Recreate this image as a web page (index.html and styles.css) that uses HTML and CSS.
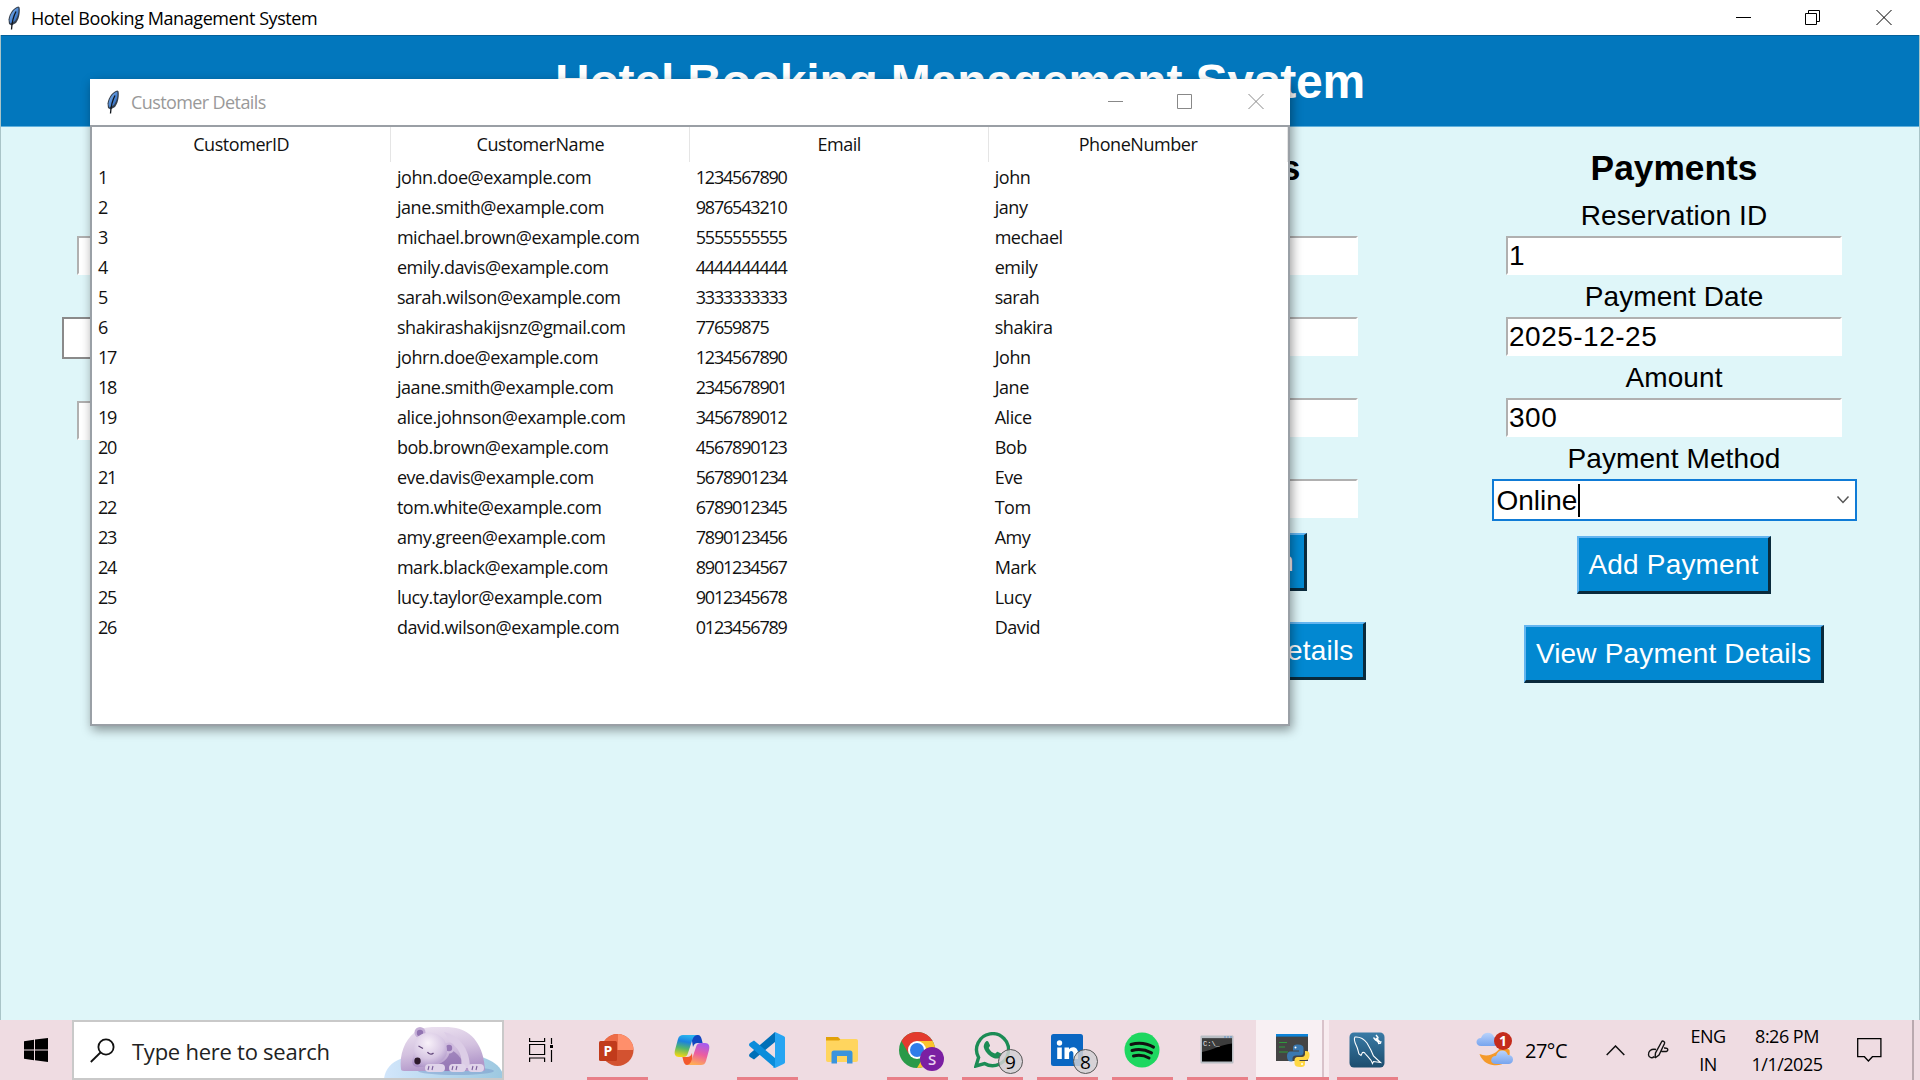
FILE: index.html
```html
<!DOCTYPE html>
<html lang="en">
<head>
<meta charset="utf-8">
<title>Hotel Booking Management System</title>
<link rel="stylesheet" href="styles.css">
</head>
<body>
<svg class="defs" width="0" height="0">
  <defs>
    <linearGradient id="gFeather" x1="0" y1="0" x2="1" y2="1"><stop offset="0" stop-color="#8fbcf0"/><stop offset=".6" stop-color="#4480d0"/><stop offset="1" stop-color="#2a5596"/></linearGradient>
    <symbol id="feather" viewBox="0 0 14 24">
      <path d="M11.500 .6C7 1.500 2.500 7 1.500 13.500L2 18l2.500 1.500L9 17c2.500-3.500 4.500-9.500 3.600-15.500z" fill="#35404e"/>
      <path d="M11.200 1.600C7 3 3 8.500 2.500 14.500l.8 3L8 15c2.500-3.500 4.200-8.500 3.200-13.400z" fill="url(#gFeather)"/>
      <path d="M9 5.500C6.500 10 5 15 4.500 23.500" stroke="#10151c" stroke-width="1.300" fill="none"/>
    </symbol>
  </defs>
</svg>

<div class="screen">
  <header class="titlebar">
    <svg class="feather" width="14" height="24"><use href="#feather"/></svg>
    <span class="titlebar-text">Hotel Booking Management System</span>
    <div class="controls">
      <svg width="16" height="20" viewBox="0 0 16 20"><path d="M0 9.500h15" stroke="#000"/></svg>
      <svg width="16" height="20" viewBox="0 0 16 20"><path d="M.5 5.500h11v11H.5zM3.500 5V2.500h11v11H12" fill="none" stroke="#000"/></svg>
      <svg width="16" height="20" viewBox="0 0 16 20"><path d="M.5 2l15 15M15.500 2l-15 15" stroke="#000"/></svg>
    </div>
  </header>

  <main class="app">
    <h1 class="banner">Hotel Booking Management System</h1>
    <div class="forms">
      <section class="form rooms">
        <div class="entry"></div>
        <div class="combo"></div>
        <div class="entry"></div>
      </section>
      <section class="form reservations">
        <h2>Reservations</h2>
        <div class="entry"></div>
        <div class="entry"></div>
        <div class="entry"></div>
        <div class="entry"></div>
        <div class="button">Add Reservation</div>
        <div class="button">View Reservations Details</div>
      </section>
      <section class="form payments">
        <h2>Payments</h2>
        <label>Reservation ID</label>
        <div class="entry">1</div>
        <label>Payment Date</label>
        <div class="entry">2025-12-25</div>
        <label>Amount</label>
        <div class="entry">300</div>
        <label>Payment Method</label>
        <div class="combo active"><span class="value">Online</span><svg width="14" height="10" viewBox="0 0 14 10"><path d="M1.500 1.500L7 7.500l5.500-6" fill="none" stroke="#555" stroke-width="1.500"/></svg></div>
        <div class="button">Add Payment</div>
        <div class="button">View Payment Details</div>
      </section>
    </div>
  </main>

  <footer class="taskbar">
    <div class="start"><svg width="24" height="24" viewBox="0 0 24 24"><path d="M0 3.300l10-1.500v9.700H0zM11 1.600L24 0v11.500H11zM0 12.500h10v9.700L0 20.800zM11 12.500h13V24l-13-1.700z"/></svg></div>
    <div class="search">
      <svg width="25" height="25" viewBox="0 0 25 25"><g fill="none" stroke="#111" stroke-width="1.800"><circle cx="16" cy="9" r="7.600"/><path d="M10.500 14.500L.8 24"/></g></svg>
      <span>Type here to search</span>
      <svg class="bear" width="120" height="52" viewBox="0 0 120 52">
        <defs>
          <linearGradient id="gIce" x1="0" x2="1"><stop offset="0" stop-color="#d2e6fb"/><stop offset="1" stop-color="#9cc8e0"/></linearGradient>
          <linearGradient id="gBody" x1="0" y1="0" x2=".3" y2="1"><stop offset="0" stop-color="#efe6f3"/><stop offset=".6" stop-color="#d3c1df"/><stop offset="1" stop-color="#b298ca"/></linearGradient>
          <radialGradient id="gHead" cx=".45" cy=".3" r=".75"><stop offset="0" stop-color="#f8f1f9"/><stop offset=".6" stop-color="#d8c8e4"/><stop offset="1" stop-color="#a98fc5"/></radialGradient>
        </defs>
        <path d="M0 52C2 33 22 26 60 26s58 8 60 26z" fill="url(#gIce)"/>
        <ellipse cx="72" cy="44" rx="38" ry="4" fill="#7797c9" opacity=".5"/>
        <path d="M17 42C15 26 22 10 34 3c8-4 28-4 38-2 16 3 28 18 29 42 0 1-2 1-4 1H20c-2 0-3-1-3-2z" fill="url(#gBody)"/>
        <path d="M44 40c14-2 22-8 22-18 8 4 14 12 16 22H44z" fill="#8464a8" opacity=".6"/>
        <path d="M60 5c14 3 26 16 26 36h-9c2-12-2-20-11-26z" fill="#dccde6"/>
        <circle cx="36" cy="5.500" r="5.500" fill="#c5afd7"/><circle cx="36" cy="6" r="3.200" fill="#9173b1"/>
        <circle cx="65" cy="21" r="5.500" fill="#cfbcde"/><circle cx="65" cy="21" r="3.200" fill="#9779b5"/>
        <path d="M32 12C38 3 54 4 60 13c6 10 3 20-7 23-5 2-10 4-17 4-7 1-9-4-7-9 2-6 0-13 3-19z" fill="url(#gHead)"/>
        <ellipse cx="33.500" cy="34" rx="3.200" ry="3.400" fill="#2d1a2b"/>
        <path d="M34.500 19l4.500 2.500M43.500 25c1 2 4 3 6 1" stroke="#5f4478" stroke-width="1.200" fill="none"/>
        <g fill="#e0d4ea"><rect x="41" y="37" width="20" height="8" rx="4"/><rect x="65" y="37" width="17" height="8" rx="4"/><rect x="84" y="37" width="16" height="8" rx="4"/></g>
        <path d="M45 39l-1 4M49 39l-1 4M69 39l-1 4M73 39l-1 4M89 39l-1 4M93 39l-1 4" stroke="#7c609d" stroke-width="1.100"/>
      </svg>
    </div>
    <div class="taskview"><svg width="24" height="24" viewBox="0 0 24 24"><path d="M.6 0v3.500h15V0M.6 6.500h15v10H.6zM.6 24v-4h15v4M22.500 0v6M22.500 12v12" fill="none" stroke="#000" stroke-width="1.200"/><rect x="21" y="7" width="3" height="3"/></svg></div>

    <div class="apps">
      <div class="app-slot open">
        <svg viewBox="0 0 36 36"><circle cx="18.500" cy="18" r="16" fill="#d35230"/><path d="M18.500 2a16 16 0 0 1 16 16h-16z" fill="#ff8f6b"/><path d="M18.500 2v16h-16a16 16 0 0 1 16-16z" fill="#ed6c47"/><rect x="0" y="9" width="18" height="20" rx="1.500" fill="#c13b1b"/><text class="ppt" x="9" y="23.500">P</text></svg>
      </div>
      <div class="app-slot">
        <svg viewBox="0 0 36 36">
          <defs><linearGradient id="gCopA" x1=".5" y1="0" x2=".3" y2="1"><stop offset="0" stop-color="#2ab3ee"/><stop offset=".3" stop-color="#1b82e0"/><stop offset=".6" stop-color="#54b66b"/><stop offset="1" stop-color="#f5d713"/></linearGradient>
          <linearGradient id="gCopB" x1=".7" y1="0" x2=".4" y2="1"><stop offset="0" stop-color="#a45bf0"/><stop offset=".5" stop-color="#ec5da0"/><stop offset="1" stop-color="#ffad55"/></linearGradient></defs>
          <path d="M17 3h7c2 0 3 2 3.600 4l1 4H24c-3 0-4 1.500-5 4z" fill="#1246c0"/>
          <path d="M19 33h-6c-2 0-3-2-3.600-4l-1-4H13c3 0 4-1.500 5-4z" fill="#f3592d"/>
          <path d="M9 3h14c-3 .5-4 3-5 6l-4 12c-1 3-2 4-5 4H5c-4 0-5-3-4-7L4 7c1-3 2.500-4 5-4z" fill="url(#gCopA)"/>
          <path d="M27 33H13c3-.5 4-3 5-6l4-12c1-3 2-4 5-4h4c4 0 5 3 4 7l-3 11c-1 3-2.500 4-5 4z" fill="url(#gCopB)"/>
        </svg>
      </div>
      <div class="app-slot open">
        <svg viewBox="0 0 36 36"><path d="M26 0v10L5 27.500 1 25c-1.300-1-1.300-2.500 0-3.600z" fill="#0070b8"/><path d="M26 36V26L5 8.500 1 11c-1.300 1-1.300 2.500 0 3.600z" fill="#0b8ddb"/><path d="M26 0l8.500 4c1 .5 1.500 1 1.500 2v24c0 1-.5 1.500-1.500 2L26 36c-1.500.3-2.200-.5-2.200-.5l2.200-.6z" fill="#27a5f2"/></svg>
      </div>
      <div class="app-slot">
        <svg viewBox="0 0 36 36"><path d="M2 5h12l3 3-2 4H2z" fill="#e2a108"/><path d="M2 8.500h13l2-1.500h15c1.300 0 2 .7 2 2v19c0 1.300-.7 2-2 2H4c-1.300 0-2-.7-2-2z" fill="#ffd55e"/><path d="M7.500 31V21c0-1.500.8-2.500 2.500-2.500h16c1.700 0 2.500 1 2.500 2.500v10.500H23V24H13v7.500H7.500z" fill="#3a94dd"/></svg>
      </div>
      <div class="app-slot open">
        <svg viewBox="0 0 36 36"><circle cx="18" cy="18" r="18" fill="#2a9a48"/><path d="M2.400 9A18 18 0 0 1 33.600 9H18l-7.800 13.500z" fill="#e33b2e"/><path d="M33.600 9A18 18 0 0 1 18 36l8-13.500L18 9z" fill="#fcc42c"/><circle cx="18" cy="18" r="9" fill="#fff"/><circle cx="18" cy="18" r="7" fill="#2f7de9"/></svg>
        <span class="badge profile">S</span>
      </div>
      <div class="app-slot open">
        <svg viewBox="0 0 36 36"><path d="M2 34l2.600-8.500A16 16 0 1 1 10.500 31.500z" fill="none" stroke="#1c8c55" stroke-width="3.400"/><path d="M12 9.500c1-.8 2-.5 2.500.5l1.500 3.200c.3.700-1.300 2.300-1.300 2.800 1.500 3.200 3.800 4.700 6.300 5.600.8 0 1.700-2 2.500-1.900l3.500 1.700c1 .6.500 2.500-.3 3.500-3 3-7 1.500-10-.5-4-3-6.500-6.500-7-9.500 0-2 .8-4.200 2.300-5.400z" fill="#1c8c55"/></svg>
        <span class="badge">9</span>
      </div>
      <div class="app-slot open">
        <svg viewBox="0 0 36 36"><rect x="2" y="2" width="32" height="32" rx="2.500" fill="#0a66c2"/><circle cx="10.500" cy="11" r="2.700" fill="#fff"/><path d="M8.200 15.500h4.600V27H8.200zM15.500 15.500H20v1.800c2.500-3.500 9-2.500 9 3.500V27h-4.600v-5.500c0-3.500-4.300-3.300-4.300 0V27h-4.600z" fill="#fff"/></svg>
        <span class="badge">8</span>
      </div>
      <div class="app-slot open">
        <svg viewBox="0 0 36 36"><circle cx="18" cy="18" r="17.500" fill="#1ed760"/><path d="M7 12.500c7.500-2 16-1 22.500 2.600M8 18.500c6.500-1.700 13.500-.8 19.500 2.400M9.500 24c5.500-1.300 11-.5 15.500 2" fill="none" stroke="#111" stroke-width="3" stroke-linecap="round"/></svg>
      </div>
      <div class="app-slot open">
        <svg viewBox="0 0 36 36"><rect x="1.500" y="3.500" width="33" height="28" rx="1" fill="#b9bec4"/><rect x="3" y="6.500" width="30" height="23" fill="#000"/><path d="M3 6.500h30v5C20 13 15 18 3 20z" fill="#3c3c3c"/><text class="cmd" x="4" y="14">C:\_</text><path d="M25 5h2M28 5h2M31 5h2" stroke="#5a8fc7"/></svg>
      </div>
      <div class="app-slot open current">
        <svg viewBox="0 0 36 36"><rect x="2" y="2" width="32" height="27" fill="#444"/><rect x="2" y="2" width="32" height="2.600" fill="#0d83d8"/><path d="M5 10.500h8M5 15h6M5 20h9" stroke="#2f9b3c" stroke-width="1.200"/><path d="M24 12.500c-4 0-5 1.500-5 3.500v2.500h6v1h-8c-3 0-4 2-4 5s1.500 5 4 5h1.500v-3c0-2 1.500-3 3.500-3h4.500c2 0 3-1.500 3-3V16c0-2-2-3.500-5.500-3.500z" fill="#3a78b0"/><path d="M26.500 35c4 0 4.500-1.500 4.500-3.500V29h-5.500v-1H32c2.500 0 3.500-2 3.500-5s-1-4-3.500-4h-1v3c0 2-1.500 3-3 3h-4.500c-2 0-3 1.500-3 3v3.500c0 2.500 2 3.500 6 3.500z" fill="#ffd845"/><circle cx="21.500" cy="15.500" r="1" fill="#fff"/><circle cx="28" cy="32" r="1" fill="#fff"/></svg>
      </div>
      <div class="app-slot open">
        <svg viewBox="0 0 36 36"><defs><linearGradient id="gSql" x1="0" y1="0" x2="0" y2="1"><stop offset="0" stop-color="#3a7ba6"/><stop offset="1" stop-color="#1d4d6e"/></linearGradient></defs><rect x=".5" y=".5" width="35" height="35" rx="4.500" fill="url(#gSql)"/><path d="M10 22c-1-3-1-5-2.500-8C6 11 4.500 7 6 5c5-.5 9 2 12 6 3 5 5 9 6.500 13l7 6.500-7-1-1 2c-1-4-4-6-7-9.500-.5-1-1.500-2-3-1.500l-1.500 3z" fill="none" stroke="#fff" stroke-width="1.100"/><path d="M26.500 6.500l4 4" stroke="#fff" stroke-width="2.600"/><path d="M24.500 5.500l2 2.500 2-.5.500-2L27 3M29 11.500l2.500-.3.500-2" fill="none" stroke="#fff" stroke-width="1.300"/></svg>
      </div>
    </div>

    <div class="tray">
      <div class="weather">
        <svg width="38" height="36" viewBox="0 0 38 36"><defs><linearGradient id="gCloud" x1="0" y1="0" x2="0" y2="1"><stop offset="0" stop-color="#b9d3fb"/><stop offset="1" stop-color="#77a4ee"/></linearGradient></defs><path d="M3.500 22c9 4 20-1 22-10l8 6c2 10-7 17-17 15-6-1-11-5-13-11z" fill="#f49a2b"/><path d="M5 14c-6 0-6-8 0-8C7-.5 16-1 18 5c7-1 7 9 1 9z" fill="url(#gCloud)"/><path d="M20 32c-7 0-6-8 0-8 2-7 10-7 12-1 7 0 6 9 1 9z" fill="url(#gCloud)"/><circle cx="27" cy="9" r="9" fill="#c42b1c"/><text class="alert" x="27" y="14">1</text></svg>
        <span>27°C</span>
      </div>
      <svg class="chev" width="19" height="11" viewBox="0 0 19 11"><path d="M.7 10L9.500 1l8.800 9" fill="none" stroke="#111" stroke-width="1.500"/></svg>
      <svg class="pen" width="22" height="22" viewBox="0 0 22 22"><path d="M8 19l.5-5L14.500 3c1-1.800 3.800-.5 3 1.500L12 16l-4 3M9 10.500c-5-1-8 2-7.500 5.500.5 3 4 3.500 5.500 1.500M17 9c5-.5 5 4 .5 3.500h-3" fill="none" stroke="#111" stroke-width="1.400"/></svg>
      <div class="lang"><span>ENG</span><span>IN</span></div>
      <div class="clock"><span>8:26 PM</span><span>1/1/2025</span></div>
      <svg class="note" width="25" height="25" viewBox="0 0 25 25"><path d="M.7.7h23.200v18h-8.500l-4 4.300-4-4.300H.7z" fill="none" stroke="#000" stroke-width="1.300"/></svg>
    </div>
  </footer>

  <section class="popup">
    <header class="popup-bar">
      <svg class="feather" width="14" height="24"><use href="#feather"/></svg>
      <span class="popup-title">Customer Details</span>
      <div class="controls">
        <svg width="16" height="20" viewBox="0 0 16 20"><path d="M0 9.500h15" stroke="#888"/></svg>
        <svg width="16" height="20" viewBox="0 0 16 20"><path d="M.5 2.500h14v14H.5z" fill="none" stroke="#888"/></svg>
        <svg width="16" height="20" viewBox="0 0 16 20"><path d="M.5 2l15 15M15.500 2l-15 15" stroke="#888"/></svg>
      </div>
    </header>
    <table class="grid">
      <thead><tr><th>CustomerID</th><th>CustomerName</th><th>Email</th><th>PhoneNumber</th></tr></thead>
      <tbody>
        <tr><td class="num">1</td><td>john.doe@example.com</td><td class="num">1234567890</td><td>john</td></tr>
        <tr><td class="num">2</td><td>jane.smith@example.com</td><td class="num">9876543210</td><td>jany</td></tr>
        <tr><td class="num">3</td><td>michael.brown@example.com</td><td class="num">5555555555</td><td>mechael</td></tr>
        <tr><td class="num">4</td><td>emily.davis@example.com</td><td class="num">4444444444</td><td>emily</td></tr>
        <tr><td class="num">5</td><td>sarah.wilson@example.com</td><td class="num">3333333333</td><td>sarah</td></tr>
        <tr><td class="num">6</td><td>shakirashakijsnz@gmail.com</td><td class="num">77659875</td><td>shakira</td></tr>
        <tr><td class="num">17</td><td>johrn.doe@example.com</td><td class="num">1234567890</td><td>John</td></tr>
        <tr><td class="num">18</td><td>jaane.smith@example.com</td><td class="num">2345678901</td><td>Jane</td></tr>
        <tr><td class="num">19</td><td>alice.johnson@example.com</td><td class="num">3456789012</td><td>Alice</td></tr>
        <tr><td class="num">20</td><td>bob.brown@example.com</td><td class="num">4567890123</td><td>Bob</td></tr>
        <tr><td class="num">21</td><td>eve.davis@example.com</td><td class="num">5678901234</td><td>Eve</td></tr>
        <tr><td class="num">22</td><td>tom.white@example.com</td><td class="num">6789012345</td><td>Tom</td></tr>
        <tr><td class="num">23</td><td>amy.green@example.com</td><td class="num">7890123456</td><td>Amy</td></tr>
        <tr><td class="num">24</td><td>mark.black@example.com</td><td class="num">8901234567</td><td>Mark</td></tr>
        <tr><td class="num">25</td><td>lucy.taylor@example.com</td><td class="num">9012345678</td><td>Lucy</td></tr>
        <tr><td class="num">26</td><td>david.wilson@example.com</td><td class="num">0123456789</td><td>David</td></tr>
      </tbody>
    </table>
  </section>
</div>
</body>
</html>
```
FILE: styles.css
```css
* { box-sizing: border-box; }
body { margin: 0; font-family: "Open Sans", "Noto Sans", sans-serif; color: #000; overflow: hidden; }
.defs { position: absolute; }
.screen { position: relative; display: flex; flex-direction: column; width: 1920px; height: 1080px; overflow: hidden; }

/* window title bars */
.titlebar { display: flex; align-items: center; height: 35px; padding: 0 28px 0 7px; background: #fff; }
.titlebar-text { margin-left: 10px; font-size: 18px; letter-spacing: -.42px; line-height: 35px; padding-top: 2px; }
.controls { display: flex; gap: 54px; margin-left: auto; }
.controls svg:nth-child(2) { margin: 0 1px 0 -1px; }

/* main window */
.app { display: flex; flex-direction: column; flex: 1; background: #dff6f9; border-left: 1px solid #a9c4c8; border-right: 1px solid #a9c4c8; }
.banner { margin: 0; height: 92px; padding-top: 2px; background: #0277bd; border-top: 1px solid #04609a; border-bottom: 1px solid #5fb0dc; color: #fff; font: bold 48px/88px "Liberation Sans", Arial, sans-serif; letter-spacing: -.2px; text-align: center; }
.forms { display: grid; grid-template-columns: 487px 456px 492px 476px; font-family: "Liberation Sans", Arial, sans-serif; font-size: 28px; }
.form { display: flex; flex-direction: column; align-items: center; }
.rooms { grid-column: 1; padding-top: 109px; gap: 42px; }
.reservations { grid-column: 3; }
.payments { grid-column: 4; }
.form h2 { margin: 0; height: 67px; padding-top: 16px; font-size: 35.300px; line-height: 50px; }
.form label { height: 42px; line-height: 43px; letter-spacing: .1px; }
.entry { width: 336px; height: 39px; padding-left: 1px; background: #fff; border: 2px solid; border-color: #b0b0b0 #fff #fff #b0b0b0; line-height: 36px; letter-spacing: .5px; }
.reservations .entry { margin-top: 42px; }
.reservations { padding-right: 1px; }
.combo { display: flex; align-items: center; justify-content: space-between; width: 366px; height: 42px; padding: 0 5px; background: #fff; border: 2px solid #8a8a8a; }
.combo.active { width: 365px; border: 2px solid #0f7bd6; padding: 0 5px 0 3px; }
.combo .value { height: 33px; padding-right: 1px; line-height: 34px; border-right: 2px solid #000; }
.button { height: 58px; margin-top: 15px; padding: 0 10px; background: #0288d1; border: 2px solid; border-color: #64b5f0 #0a2a3c #0a2a3c #64b5f0; border-right-width: 3px; border-bottom-width: 3px; color: #fff; line-height: 54px; letter-spacing: .17px; }
.button + .button { margin-top: 31px; }

/* customer window */
.popup { position: absolute; left: 90px; top: 79px; width: 1200px; height: 647px; background: #fff; border: 2px solid #9aa0a6; border-top: 0; box-shadow: 2px 4px 10px rgba(0, 0, 0, .4); }
.popup-bar { display: flex; align-items: center; height: 48px; margin: 0 -2px; padding: 0 26px 0 16px; background: #fff; border-bottom: 2px solid #9a9fa5; }
.popup-title { margin-left: 11px; font-size: 18px; letter-spacing: -.6px; color: #999; }
.grid { width: 1196px; border-collapse: collapse; table-layout: fixed; font-size: 18px; letter-spacing: -.43px; color: #111; }
.grid th { height: 35px; padding: 0 0 1px; font-weight: 400; line-height: 24px; border-right: 1px solid #e5e5e5; }
.grid td { height: 30px; padding: 0 0 0 6px; line-height: 28px; }
.grid .num { letter-spacing: -1.200px; }

/* taskbar */
.taskbar { display: flex; height: 60px; background: #efdce2; }
.start { display: grid; place-items: center; width: 72px; }
.search { display: flex; align-items: center; width: 432px; height: 60px; padding-left: 16px; background: #fff; border: 2px solid #c9c9c9; font-size: 22px; color: #222; overflow: hidden; }
.search span { margin-left: 17px; padding-top: 1px; letter-spacing: -.25px; white-space: nowrap; }
.search .bear { margin: 6px -2px 0 auto; flex: none; }
.taskview { display: grid; place-items: center; width: 75px; padding-right: 1px; }
.apps { display: flex; }
.app-slot { position: relative; display: grid; place-items: center; width: 75px; height: 60px; }
.app-slot > svg { width: 36px; height: 36px; }
.app-slot.open::after { content: ""; position: absolute; left: 8px; right: 6px; bottom: 0; height: 3px; background: #e97f88; }
.app-slot.current { background: linear-gradient(90deg, transparent 2px, #f8f0f3 2px 68px, #d9c3ca 68px 70px, #f8ecef 70px 75px); }
.app-slot.current::after { left: 2px; right: 0; }
.badge { position: absolute; left: 44px; top: 29px; width: 25px; height: 25px; border-radius: 50%; border: 1px solid #555; background: rgba(210, 208, 212, .85); font-size: 19px; line-height: 24px; text-align: center; }
.badge.profile { left: 41px; top: 27px; width: 24px; height: 24px; border: 0; background: #7b1fa2; color: #ead4f2; font-size: 15px; font-weight: 600; }
.ppt { fill: #fff; font: bold 14px "Open Sans", sans-serif; text-anchor: middle; }
.cmd { fill: #eee; font: 7px "Liberation Mono", monospace; }
.alert { fill: #fff; font: bold 14px "Open Sans", sans-serif; text-anchor: middle; }

.tray { display: flex; align-items: center; flex: 1; background: linear-gradient(90deg, transparent 508px, #b9a9af 508px 510px, transparent 510px); }
.weather { display: flex; align-items: center; margin-left: 72px; width: 130px; font-size: 20px; }
.weather span { margin-left: 11px; letter-spacing: -.5px; }
.chev { width: 19px; flex: none; }
.pen { margin-left: 22px; flex: none; }
.lang, .clock { display: flex; flex-direction: column; align-items: center; font-size: 18px; line-height: 28px; letter-spacing: -.5px; }
.lang { width: 60px; margin-left: 9px; }
.clock { width: 98px; }
.note { margin-left: 21px; flex: none; }
```
